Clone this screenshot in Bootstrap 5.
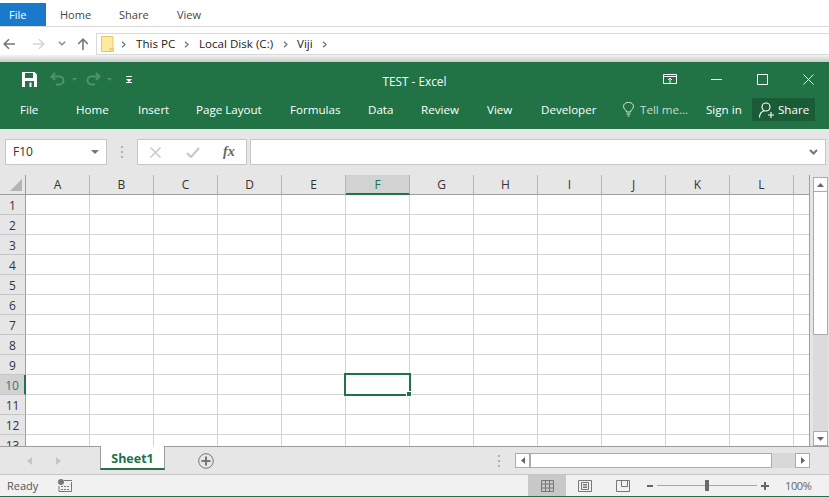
<!DOCTYPE html>
<html lang="en">
<head>
<meta charset="utf-8">
<title>TEST - Excel</title>
<link href="https://cdn.jsdelivr.net/npm/bootstrap@5.3.0/dist/css/bootstrap.min.css" rel="stylesheet">
<style>
html,body{margin:0;width:829px;height:497px;overflow:hidden;background:#fff;font-family:"Open Sans","Noto Sans",sans-serif;font-size:11.6px;color:#444;line-height:1}
svg{display:block;flex:none}
.ex-tabs{height:27px;border-bottom:1px solid #d9d9d9;padding-top:3px;font-size:11px}
.ex-file{width:46px;height:23px;background:#1979ca;color:#fff;padding-left:9px}
.ex-home{margin-left:14px;width:59px}.ex-share{width:58px}
.ex-nav{height:28px;padding:5px 0 0 3px}
.ic-fwd{margin-left:18px}.ic-down{margin-left:13px}.ic-up{margin-left:11px}
.ex-addr{margin-left:7px;height:22px;flex:1;border:1px solid #d9d9d9;border-right:0;margin-top:1px;padding-left:4px;color:#222}
.chv-a{margin-left:7px}.crumb-a{margin-left:10px;width:48px}.crumb-b{margin-left:10px;width:84px}.crumb-c{margin-left:9px;width:25px}
.ex-shadow{height:7px;background:linear-gradient(#f4f4f4,#c9c9c9)}
.xl-head{background:#217346;color:#fff;height:67px}
.xl-title{height:34px}
.xl-side{flex:1 1 0}
.xl-caption{padding-top:5px;font-size:11.8px}
.ic-save{margin-left:22px}.ic-undo{margin-left:13px}.car-a{margin-left:7px}.ic-redo{margin-left:9px}.car-b{margin-left:6px}.ic-cust{margin-left:14px}
.ic-min{margin-left:34px}.ic-max{margin-left:35px}.ic-close{margin-left:35px;margin-right:15px}
.xl-ribbon{height:33px;padding-bottom:6px}
.rib{flex:none}
.r-file{margin-left:20px;width:56px;padding-top:1px}.r-home{width:62px}.r-ins{width:58px}.r-page{width:94px}.r-form{width:78px}.r-data{width:53px}.r-rev{width:66px}.r-view{width:54px}.r-dev{width:82px}
.r-tell{margin-left:6px;width:66px;color:#c9dcd1}.r-sign{width:46px}
.share{width:63px;height:23px;background:#1a5c36;padding-left:7px;gap:4px}
.fbar{height:46px;background:#e6e6e6;padding:10px 3px 0 5px}
.fbox{height:26px;background:#fff;border:1px solid #c6c6c6}
.namebox{width:102px;padding:0 7px;color:#333;font-size:12px}
.fdots{margin:7px 0 0 14px}
.fxbox{width:110px;margin-left:13px;padding-left:12px}
.ic-chk{margin-left:25px}
.fxlabel{margin-left:23px;font-family:"Liberation Serif",serif;font-size:14px;color:#666;font-style:italic;font-weight:700}
.fmbox{flex:1;margin-left:3px;padding-right:7px}
.sheetarea{height:271px;background:#e6e6e6}
.gridwrap{width:810px;height:271px;overflow:hidden;border-right:1px solid #9e9e9e}
.xlgrid{table-layout:fixed;width:858px;border-collapse:separate;border-spacing:0}
.xlgrid th{font-weight:400;text-align:center;background:#e6e6e6;color:#333;padding:0;font-size:12px}
.xlgrid thead th{height:20px;width:64px;padding-top:1px;border-right:1px solid #b5b5b5;border-bottom:1px solid #9e9e9e}
.xlgrid thead th:first-child{width:26px;border-right:1px solid #9e9e9e}
.xlgrid tbody th{height:20px;padding-top:2px;border-right:1px solid #9e9e9e;border-bottom:1px solid #c6c6c6;color:#334}
.xlgrid td{height:20px;background:#fff;border-right:1px solid #d4d4d4;border-bottom:1px solid #d4d4d4;padding:0;position:relative}
.xlgrid thead th.selc{background:#d2d2d2;color:#217346;border-bottom:2px solid #217346}
.xlgrid tbody th.selr{background:#d2d2d2;color:#2a7a7a;border-right:2px solid #217346}
.xlgrid thead th.corner{padding:4px 0 0 10px;vertical-align:top}
.selbox{position:absolute;left:-2px;top:-2px;width:67px;height:23px;border:2px solid #217346;z-index:2}
.selbox::after{content:"";position:absolute;right:-3px;bottom:-3px;width:6px;height:6px;background:#217346;border:1px solid #fff}
.vscroll{width:15px;margin:2px 0 0 3px;height:269px;background:#dbdbdb}
.sbtn{background:#fff;border:1px solid #ababab}
.vbtn{height:15px}
.vthumb{height:143px;background:#fff;border:1px solid #ababab;border-top:0}
.vfill{flex:1}
.tabbar{height:28px;background:#e6e6e6;border-top:1px solid #9e9e9e}
.navarrows{width:100px;padding-left:27px;gap:24px}
.sheettab{width:65px;height:24px;margin-top:-1px;padding-top:5px;background:#fff;color:#217346;font-weight:700;border-left:1px solid #9e9e9e;border-right:1px solid #9e9e9e;border-bottom:2px solid #217346;font-size:12.5px}
.addsheet{margin-left:33px}
.tabdots{margin-left:284px}
.hscroll{margin-left:14px;width:295px;height:15px;background:#d8d8d8}
.hbtn{width:15px;height:15px}
.hthumb{width:242px;height:15px;background:#fff;border:1px solid #ababab}
.hfill{flex:1}
.statusbar{height:23px;background:#f1f1f1;border-top:1px solid #c6c6c6;border-bottom:1px solid #217346;color:#555;font-size:11px}
.ready{width:58px;padding-left:7px;padding-bottom:1px}
.macro{width:470px}
.viewon{width:38px;height:21px;background:#c8c8c8}
.viewoff{width:38px;height:21px}
.zminus{margin-left:5px}
.ztrack{width:100px;height:1px;background:#a6a6a6;position:relative;margin-left:4px}
.zthumb{position:absolute;left:48px;top:-5px;width:4px;height:11px;background:#6a6a6a}
.zplus{margin-left:4px}
.zpct{margin-left:16px;padding-bottom:1px;color:#666;letter-spacing:-.4px}
</style>
</head>
<body>
<div class="ex-tabs d-flex align-items-center">
  <div class="ex-file d-flex align-items-center">File</div>
  <div class="ex-home">Home</div>
  <div class="ex-share">Share</div>
  <div>View</div>
</div>
<div class="ex-nav d-flex align-items-center">
  <svg width="12" height="12" viewBox="0 0 12 12" fill="none" stroke="#777" stroke-width="1.6"><path d="M12 6H1.500M6 1.200 1.200 6 6 10.800"/></svg>
  <svg class="ic-fwd" width="12" height="12" viewBox="0 0 12 12" fill="none" stroke="#d5d5d5" stroke-width="1.6"><path d="M0 6h10.500M6 1.200 10.800 6 6 10.800"/></svg>
  <svg class="ic-down" width="8" height="5" viewBox="0 0 8 5" fill="none" stroke="#8a8a8a" stroke-width="1.5"><path d="M.8.800 4 3.800 7.200.8"/></svg>
  <svg class="ic-up" width="12" height="12" viewBox="0 0 12 12" fill="none" stroke="#777" stroke-width="1.6"><path d="M6 12V1.500M1.200 6 6 1.200 10.800 6"/></svg>
  <div class="ex-addr d-flex align-items-center">
    <svg width="13" height="16" viewBox="0 0 13 16"><path d="M.5.500h11.500v12l-3 3H.5z" fill="#fde9a0" stroke="#e8c765"/><path d="M9 15.500v-3h3.500v3z" fill="#fbdc80" stroke="#e8c765"/></svg>
    <svg class="chv-a" width="5" height="7" viewBox="0 0 5 7" fill="none" stroke="#777" stroke-width="1.3"><path d="M1 .8 4 3.500 1 6.200"/></svg>
    <span class="crumb-a">This PC</span>
    <svg width="5" height="7" viewBox="0 0 5 7" fill="none" stroke="#777" stroke-width="1.3"><path d="M1 .8 4 3.500 1 6.200"/></svg>
    <span class="crumb-b">Local Disk (C:)</span>
    <svg width="5" height="7" viewBox="0 0 5 7" fill="none" stroke="#777" stroke-width="1.3"><path d="M1 .8 4 3.500 1 6.200"/></svg>
    <span class="crumb-c">Viji</span>
    <svg width="5" height="7" viewBox="0 0 5 7" fill="none" stroke="#777" stroke-width="1.3"><path d="M1 .8 4 3.500 1 6.200"/></svg>
  </div>
</div>
<div class="ex-shadow"></div>

<div class="xl-head">
  <div class="xl-title d-flex align-items-center">
    <div class="xl-side d-flex align-items-center">
      <svg class="ic-save" width="15" height="15" viewBox="0 0 15 15"><path d="M0 0h12.500L15 2.500V15H0z" fill="#fff"/><path d="M3 1h8v5H3zM3 9h9v6H3z" fill="#217346"/><path d="M7.500 10.500h2V15h-2z" fill="#fff"/></svg>
      <svg class="ic-undo" width="15" height="14" viewBox="0 0 15 14" fill="none" stroke="#4f9270" stroke-width="2"><path d="M5 1 1.500 4.500 5 8M2 4.500h7.500a4 4 0 0 1 0 8H6"/></svg>
      <svg class="car-a" width="5" height="3" viewBox="0 0 5 3"><path d="M0 0h5L2.500 3z" fill="#4f9270"/></svg>
      <svg class="ic-redo" width="15" height="14" viewBox="0 0 15 14" fill="none" stroke="#4f9270" stroke-width="2"><path d="M10 1l3.500 3.500L10 8M13 4.500H5.500a4 4 0 0 0 0 8H9"/></svg>
      <svg class="car-b" width="5" height="3" viewBox="0 0 5 3"><path d="M0 0h5L2.500 3z" fill="#4f9270"/></svg>
      <svg class="ic-cust" width="6" height="7" viewBox="0 0 6 7"><path d="M0 0h6v1H0zM0 3h6L3 6zM0 6h6v1H0z" fill="#fff"/></svg>
    </div>
    <div class="rib xl-caption">TEST - Excel</div>
    <div class="xl-side d-flex align-items-center justify-content-end">
      <svg width="14" height="10" viewBox="0 0 14 10" fill="none" stroke="#fff"><path d="M.5.500h13v9H.5zM.5 2.500h13M7 9V4M5 6l2-2 2 2"/></svg>
      <svg class="ic-min" width="11" height="1" viewBox="0 0 11 1"><path d="M0 0h11v1H0z" fill="#fff"/></svg>
      <svg class="ic-max" width="11" height="11" viewBox="0 0 11 11" fill="none" stroke="#fff"><path d="M.5.500h10v10H.5z"/></svg>
      <svg class="ic-close" width="11" height="11" viewBox="0 0 11 11" fill="none" stroke="#fff"><path d="M.5.500l10 10M10.500.5l-10 10"/></svg>
    </div>
  </div>
  <div class="xl-ribbon d-flex align-items-center">
    <div class="rib r-file">File</div>
    <div class="rib r-home">Home</div>
    <div class="rib r-ins">Insert</div>
    <div class="rib r-page">Page Layout</div>
    <div class="rib r-form">Formulas</div>
    <div class="rib r-data">Data</div>
    <div class="rib r-rev">Review</div>
    <div class="rib r-view">View</div>
    <div class="rib r-dev">Developer</div>
    <svg width="11" height="15" viewBox="0 0 11 15" fill="none" stroke="#d9e7df"><path d="M3.500 10c0-2-3-3-3-5.500a5 4.200 0 0 1 10 0c0 2.500-3 3.500-3 5.500zM3.500 12h4M4.500 14h2"/></svg>
    <div class="rib r-tell">Tell me...</div>
    <div class="rib r-sign">Sign in</div>
    <div class="share rib d-flex align-items-center">
      <svg width="15" height="16" viewBox="0 0 15 16" fill="none" stroke="#fff" stroke-width="1.100"><circle cx="7" cy="5" r="4"/><path d="M.5 15.500c0-4 2.500-6 5-7M9 13h6M12 10v6"/></svg>
      <span>Share</span>
    </div>
  </div>
</div>

<div class="fbar d-flex align-items-start">
  <div class="fbox namebox d-flex align-items-center justify-content-between">
    <span>F10</span>
    <svg width="8" height="4" viewBox="0 0 8 4"><path d="M0 0h8L4 4z" fill="#777"/></svg>
  </div>
  <svg class="fdots" width="3" height="12" viewBox="0 0 3 12"><path d="M0 0h2v2H0zM0 5h2v2H0zM0 10h2v2H0z" fill="#b0b0b0"/></svg>
  <div class="fbox fxbox d-flex align-items-center">
    <svg width="11" height="11" viewBox="0 0 11 11" fill="none" stroke="#c8c8c8" stroke-width="1.500"><path d="M.5.500l10 10M10.500.5l-10 10"/></svg>
    <svg class="ic-chk" width="14" height="11" viewBox="0 0 14 11" fill="none" stroke="#c8c8c8" stroke-width="2.200"><path d="M1 6l4 4 8-9"/></svg>
    <span class="fxlabel">fx</span>
  </div>
  <div class="fbox fmbox d-flex align-items-center justify-content-end">
    <svg width="9" height="6" viewBox="0 0 9 6" fill="none" stroke="#777" stroke-width="2"><path d="M1 1l3.500 3.500L8 1"/></svg>
  </div>
</div>

<div class="sheetarea d-flex">
  <div class="gridwrap">
    <table class="xlgrid">
      <thead><tr>
        <th class="corner"><svg width="12" height="12" viewBox="0 0 12 12"><path d="M12 0v12H0z" fill="#b4b4b4"/></svg></th>
        <th>A</th><th>B</th><th>C</th><th>D</th><th>E</th><th class="selc">F</th><th>G</th><th>H</th><th>I</th><th>J</th><th>K</th><th>L</th><th></th>
      </tr></thead>
      <tbody>
        <tr><th>1</th><td></td><td></td><td></td><td></td><td></td><td></td><td></td><td></td><td></td><td></td><td></td><td></td><td></td></tr>
        <tr><th>2</th><td></td><td></td><td></td><td></td><td></td><td></td><td></td><td></td><td></td><td></td><td></td><td></td><td></td></tr>
        <tr><th>3</th><td></td><td></td><td></td><td></td><td></td><td></td><td></td><td></td><td></td><td></td><td></td><td></td><td></td></tr>
        <tr><th>4</th><td></td><td></td><td></td><td></td><td></td><td></td><td></td><td></td><td></td><td></td><td></td><td></td><td></td></tr>
        <tr><th>5</th><td></td><td></td><td></td><td></td><td></td><td></td><td></td><td></td><td></td><td></td><td></td><td></td><td></td></tr>
        <tr><th>6</th><td></td><td></td><td></td><td></td><td></td><td></td><td></td><td></td><td></td><td></td><td></td><td></td><td></td></tr>
        <tr><th>7</th><td></td><td></td><td></td><td></td><td></td><td></td><td></td><td></td><td></td><td></td><td></td><td></td><td></td></tr>
        <tr><th>8</th><td></td><td></td><td></td><td></td><td></td><td></td><td></td><td></td><td></td><td></td><td></td><td></td><td></td></tr>
        <tr><th>9</th><td></td><td></td><td></td><td></td><td></td><td></td><td></td><td></td><td></td><td></td><td></td><td></td><td></td></tr>
        <tr><th class="selr">10</th><td></td><td></td><td></td><td></td><td></td><td><div class="selbox"></div></td><td></td><td></td><td></td><td></td><td></td><td></td><td></td></tr>
        <tr><th>11</th><td></td><td></td><td></td><td></td><td></td><td></td><td></td><td></td><td></td><td></td><td></td><td></td><td></td></tr>
        <tr><th>12</th><td></td><td></td><td></td><td></td><td></td><td></td><td></td><td></td><td></td><td></td><td></td><td></td><td></td></tr>
        <tr><th>13</th><td></td><td></td><td></td><td></td><td></td><td></td><td></td><td></td><td></td><td></td><td></td><td></td><td></td></tr>
      </tbody>
    </table>
  </div>
  <div class="vscroll d-flex flex-column">
    <div class="sbtn vbtn d-flex align-items-center justify-content-center"><svg width="7" height="4" viewBox="0 0 7 4"><path d="M0 4h7L3.500 0z" fill="#666"/></svg></div>
    <div class="vthumb"></div>
    <div class="vfill"></div>
    <div class="sbtn vbtn d-flex align-items-center justify-content-center"><svg width="7" height="4" viewBox="0 0 7 4"><path d="M0 0h7L3.500 4z" fill="#666"/></svg></div>
  </div>
</div>

<div class="tabbar d-flex align-items-start">
  <div class="navarrows d-flex align-items-center align-self-center">
    <svg width="5" height="8" viewBox="0 0 5 8"><path d="M5 0v8L0 4z" fill="#c4c4c4"/></svg>
    <svg width="5" height="8" viewBox="0 0 5 8"><path d="M0 0v8l5-4z" fill="#c4c4c4"/></svg>
  </div>
  <div class="sheettab d-flex align-items-center justify-content-center">Sheet1</div>
  <svg class="addsheet align-self-center" width="16" height="16" viewBox="0 0 16 16" fill="none" stroke="#777"><circle cx="8" cy="8" r="7.300"/><path d="M3.500 8h9M8 3.500v9" stroke-width="2"/></svg>
  <svg class="tabdots align-self-center" width="3" height="12" viewBox="0 0 3 12"><path d="M0 0h2v2H0zM0 5h2v2H0zM0 10h2v2H0z" fill="#b0b0b0"/></svg>
  <div class="hscroll d-flex align-self-center">
    <div class="sbtn hbtn d-flex align-items-center justify-content-center"><svg width="4" height="7" viewBox="0 0 4 7"><path d="M4 0v7L0 3.500z" fill="#666"/></svg></div>
    <div class="hthumb"></div>
    <div class="hfill"></div>
    <div class="sbtn hbtn d-flex align-items-center justify-content-center"><svg width="4" height="7" viewBox="0 0 4 7"><path d="M0 0v7l4-3.500z" fill="#666"/></svg></div>
  </div>
</div>

<div class="statusbar d-flex align-items-center">
  <div class="ready">Ready</div>
  <div class="macro"><svg width="14" height="13" viewBox="0 0 14 13" fill="none"><circle cx="3" cy="3" r="3" fill="#777"/><path d="M6 1.500h8M1 7v5.500h12.500V3" stroke="#777"/><path d="M3 7h2v1H3zm3 0h2v1H6zm3 0h2v1H9zM3 10h2v1H3zm3 0h2v1H6zm3 0h2v1H9z" fill="#777"/></svg></div>
  <div class="viewon d-flex align-items-center justify-content-center"><svg width="13" height="12" viewBox="0 0 13 12" fill="none" stroke="#777"><path d="M.5.500h12v11H.5zM.5 4h12M.5 8h12M4.500.5v11M8.500.5v11"/></svg></div>
  <div class="viewoff d-flex align-items-center justify-content-center"><svg width="14" height="12" viewBox="0 0 14 12" fill="none" stroke="#777"><path d="M.5.500h13v11H.5zM3.500 2.500h7v7h-7zM5 4.500h4M5 6h4M5 7.500h4"/></svg></div>
  <div class="viewoff d-flex align-items-center justify-content-center"><svg width="14" height="12" viewBox="0 0 14 12" fill="none" stroke="#777"><path d="M.5.500h13v11H.5zM5.500.5v6h6v-6"/></svg></div>
  <svg class="zminus" width="6" height="2" viewBox="0 0 6 2"><path d="M0 0h6v2H0z" fill="#666"/></svg>
  <div class="ztrack"><div class="zthumb"></div></div>
  <svg class="zplus" width="8" height="8" viewBox="0 0 8 8"><path d="M3 0h2v3h3v2H5v3H3V5H0V3h3z" fill="#666"/></svg>
  <div class="zpct">100%</div>
</div>
<script src="https://cdn.jsdelivr.net/npm/bootstrap@5.3.0/dist/js/bootstrap.bundle.min.js"></script>
</body>
</html>
